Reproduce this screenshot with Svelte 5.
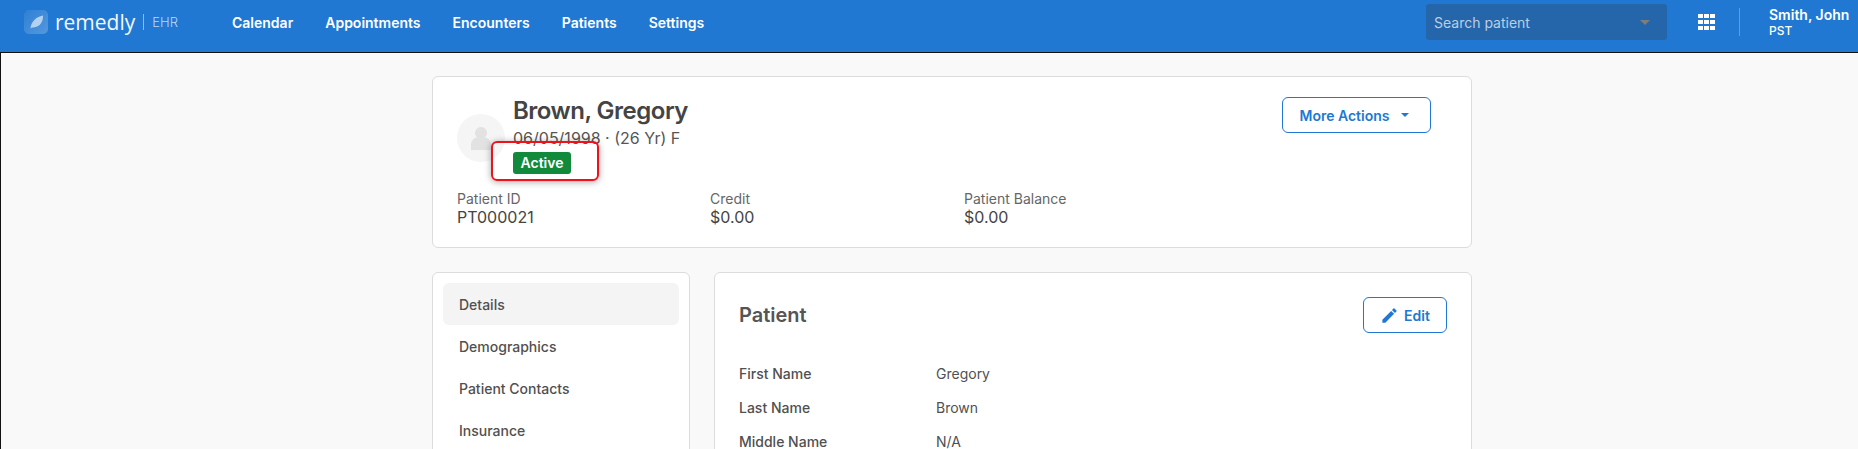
<script>
  const navLinks = ["Calendar", "Appointments", "Encounters", "Patients", "Settings"];
  const sideLinks = ["Details", "Demographics", "Patient Contacts", "Insurance"];
  const stats = [
    { label: "Patient ID", value: "PT000021" },
    { label: "Credit", value: "$0.00" },
    { label: "Patient Balance", value: "$0.00" }
  ];
  const fields = [
    { label: "First Name", value: "Gregory" },
    { label: "Last Name", value: "Brown" },
    { label: "Middle Name", value: "N/A" }
  ];
</script>

<div class="page">
  <header class="topbar">
    <div class="brand">
      <span class="logo-mark">
        <svg viewBox="0 0 24 24" width="24" height="24">
          <defs>
            <linearGradient id="markFill" x1="0" y1="0" x2="1" y2="1">
              <stop offset="0" stop-color="#fff" stop-opacity="0.06" />
              <stop offset="1" stop-color="#fff" stop-opacity="0.24" />
            </linearGradient>
          </defs>
          <rect width="24" height="24" rx="5" fill="url(#markFill)" />
          <path d="M6.500 18.500C7 12 11.500 7 19 5.500c.3 6.500-3.200 11-8.300 11.700-1.700.2-3.200.2-4.200 1.300z" fill="#fff" fill-opacity="0.6" />
        </svg>
      </span>
      <span class="logo-word">remedly</span>
      <span class="logo-sub">EHR</span>
    </div>
    <nav class="main-nav">
      {#each navLinks as link}
        <span>{link}</span>
      {/each}
    </nav>
    <div class="top-right">
      <div class="search">
        <span>Search patient</span>
        <i class="search-caret"></i>
      </div>
      <svg class="apps" viewBox="0 0 17 16" width="17" height="16" fill="#fff">
        {#each [0, 6, 12] as y}
          {#each [0, 6, 12] as x}
            <rect {x} {y} width="5" height="4" />
          {/each}
        {/each}
      </svg>
      <div class="user">
        <strong>Smith, John</strong>
        <span>PST</span>
      </div>
    </div>
  </header>

  <main class="content">
    <section class="card patient-card">
      <div class="patient-top">
        <div class="avatar">
          <svg viewBox="0 0 20 23" width="20" height="23" fill="#e2e2e2">
            <circle cx="10" cy="6" r="6" />
            <path d="M0 23v-5c0-4 2.500-7 6-7.500h8c3.500.5 6 3.500 6 7.500v5z" />
          </svg>
        </div>
        <div class="who">
          <h1>Brown, Gregory</h1>
          <p>06/05/1998 · (26 Yr) F</p>
          <span class="badge">Active</span>
        </div>
        <button class="btn more">More Actions <i class="btn-caret"></i></button>
      </div>
      <div class="stats">
        {#each stats as stat}
          <div class="stat">
            <span>{stat.label}</span>
            <b>{stat.value}</b>
          </div>
        {/each}
      </div>
      <div class="callout"></div>
    </section>

    <div class="lower">
      <aside class="card side">
        {#each sideLinks as link, i}
          <div class="side-link" class:active={i === 0}>{link}</div>
        {/each}
      </aside>
      <section class="card details">
        <div class="details-head">
          <h2>Patient</h2>
          <button class="btn edit">
            <svg viewBox="0 0 24 24" width="19" height="19" fill="currentColor">
              <path d="M3 17.250V21h3.750L17.810 9.940l-3.750-3.750L3 17.250zM20.710 7.040a1 1 0 0 0 0-1.410l-2.340-2.340a1 1 0 0 0-1.410 0l-1.830 1.830 3.750 3.750 1.830-1.830z" />
            </svg>
            Edit
          </button>
        </div>
        {#each fields as field}
          <div class="field">
            <span>{field.label}</span>
            <span class="val">{field.value}</span>
          </div>
        {/each}
      </section>
    </div>
  </main>
</div>

<style>
  :global(body) {
    margin: 0;
    font-family: Inter, "Noto Sans", sans-serif;
    background: #f9f9f9;
    overflow: hidden;
  }

  .page {
    height: 449px;
    overflow: hidden;
    box-sizing: border-box;
  }

  .topbar {
    height: 53px;
    box-sizing: border-box;
    background: #2078d2;
    border-bottom: 1px solid #111;
    display: flex;
    align-items: center;
    color: #fff;
    padding: 0 0 8px 24px;
  }

  .brand {
    width: 208px;
    display: flex;
    align-items: center;
  }

  .logo-mark {
    display: flex;
    margin-right: 7px;
  }

  .logo-word {
    font-family: "Open Sans", sans-serif;
    font-weight: 400;
    font-size: 21px;
    line-height: 30px;
    color: #f2f7fc;
    padding-right: 8px;
  }

  .logo-sub {
    font-size: 13px;
    font-weight: 300;
    line-height: 16px;
    color: #bcd7f2;
    border-left: 1px solid #8fbde9;
    padding-left: 8px;
  }

  .main-nav {
    display: flex;
    gap: 32px;
    font-size: 14px;
    font-weight: 600;
  }

  .top-right {
    margin-left: auto;
    display: flex;
    align-items: center;
  }

  .search {
    width: 241px;
    height: 36px;
    box-sizing: border-box;
    padding: 0 17px 0 8px;
    border-radius: 3px;
    background: #2566ab;
    color: #b9cfe6;
    font-size: 14px;
    display: flex;
    align-items: center;
    justify-content: space-between;
  }

  .search-caret {
    border-top: 5px solid #7d7d7d;
    border-left: 5px solid transparent;
    border-right: 5px solid transparent;
  }

  .apps {
    margin-left: 31px;
  }

  .user {
    margin-left: 24px;
    width: 119px;
    height: 28px;
    box-sizing: border-box;
    padding-left: 29px;
    border-left: 1px solid #5d9cdd;
    display: flex;
    flex-direction: column;
    justify-content: center;
  }

  .user strong {
    font-size: 14px;
    font-weight: 600;
    line-height: 17px;
  }

  .user span {
    font-size: 12px;
    font-weight: 500;
    line-height: 15px;
  }

  .content {
    height: 396px;
    box-sizing: border-box;
    border-left: 1px solid #111;
    padding: 23px 386px 0 431px;
  }

  .card {
    background: #fff;
    border: 1px solid #dcdcdc;
    border-radius: 6px;
    box-sizing: border-box;
  }

  .patient-card {
    position: relative;
    height: 172px;
    padding: 19px 40px 0 24px;
  }

  .patient-top {
    display: flex;
    align-items: flex-start;
    height: 88px;
  }

  .avatar {
    width: 48px;
    height: 48px;
    margin-top: 18px;
    border-radius: 50%;
    background: #f5f5f5;
    display: flex;
    align-items: center;
    justify-content: center;
  }

  .who {
    margin-left: 8px;
    flex: 1;
    color: #444;
  }

  .who h1 {
    margin: 0;
    font-size: 24px;
    font-weight: 600;
    line-height: 29px;
    letter-spacing: -0.5px;
  }

  .who p {
    margin: 3px 0 0;
    font-size: 16px;
    line-height: 20px;
    color: #555;
  }

  .badge {
    display: block;
    margin-top: 4px;
    width: 58px;
    height: 22px;
    background: #118a3c;
    border-radius: 3px;
    color: #fff;
    font-size: 14px;
    font-weight: 600;
    line-height: 22px;
    text-align: center;
  }

  .btn {
    background: #fff;
    border: 1px solid #2078d2;
    border-radius: 6px;
    color: #2078d2;
    font-family: inherit;
    font-size: 14px;
    font-weight: 600;
    display: flex;
    align-items: center;
    justify-content: center;
    box-sizing: border-box;
  }

  .more {
    width: 149px;
    height: 36px;
    margin-top: 1px;
    gap: 11px;
    padding: 0 5px 0 0;
  }

  .btn-caret {
    border-top: 4px solid #2078d2;
    border-left: 4px solid transparent;
    border-right: 4px solid transparent;
  }

  .stats {
    display: grid;
    grid-template-columns: 253px 254px 1fr;
    margin-top: 6px;
  }

  .stat span {
    display: block;
    font-size: 14px;
    line-height: 18px;
    color: #666;
  }

  .stat b {
    display: block;
    font-size: 16px;
    font-weight: 400;
    line-height: 18px;
    color: #444;
  }

  /* annotation drawn over the screenshot */
  .callout {
    position: absolute;
    left: 58px;
    top: 64px;
    width: 108px;
    height: 40px;
    box-sizing: border-box;
    border: 2px solid #f0111a;
    border-radius: 6px;
    box-shadow: 0 1px 7px rgba(0, 0, 0, 0.35);
  }

  .lower {
    display: grid;
    grid-template-columns: 258px 1fr;
    gap: 24px;
    margin-top: 24px;
  }

  .side {
    height: 240px;
    padding: 10px;
  }

  .side-link {
    height: 42px;
    padding-left: 16px;
    border-radius: 6px;
    display: flex;
    align-items: center;
    font-size: 14px;
    font-weight: 500;
    color: #505050;
  }

  .side-link.active {
    background: #f4f4f4;
  }

  .details {
    height: 240px;
    padding: 24px 24px 0;
  }

  .details-head {
    display: flex;
    align-items: center;
    justify-content: space-between;
    height: 36px;
    margin-bottom: 23px;
  }

  .details-head h2 {
    margin: 0;
    font-size: 20px;
    font-weight: 600;
    color: #555;
  }

  .edit {
    width: 84px;
    height: 36px;
    gap: 5px;
    padding: 0;
  }

  .field {
    display: grid;
    grid-template-columns: 197px 1fr;
    height: 34px;
    align-items: center;
    font-size: 14px;
    font-weight: 500;
    color: #505050;
  }

  .field .val {
    font-weight: 400;
  }
</style>
